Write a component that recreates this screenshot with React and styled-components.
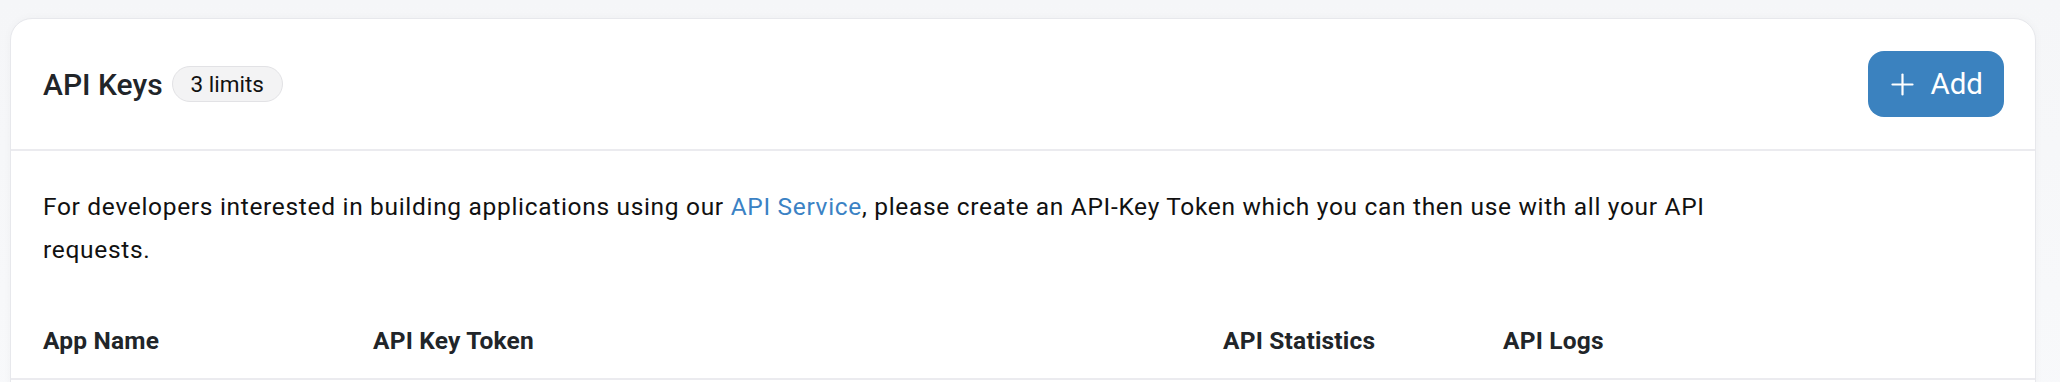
import React from "react";
import styled, { createGlobalStyle } from "styled-components";

const Global = createGlobalStyle`
  html, body { margin: 0; padding: 0; background: #f7f8fa; }
  body { font-family: Roboto, "Noto Sans", "Liberation Sans", sans-serif; color: #111; }
  * { box-sizing: border-box; }
`;

const Page = styled.div`
  padding: 18px 24px 0 10px;
  min-height: 382px;
  background: linear-gradient(180deg, #f5f6f8 0%, #f8f9fb 100%);
`;

const Card = styled.section`
  min-height: 420px;
  background: #fff;
  border: 1.5px solid #e7e8ec;
  border-radius: 22px 22px 0 0;
  box-shadow: 0 0 10px rgba(20, 30, 60, 0.03);
`;

const Header = styled.header`
  display: flex;
  align-items: center;
  justify-content: space-between;
  padding: 32px 31px 32px 32px;
  border-bottom: 2px solid #ebebef;
`;

const TitleGroup = styled.div`
  display: flex;
  align-items: center;
  gap: 9px;
`;

const Title = styled.h2`
  margin: 0;
  font-size: 30px;
  font-weight: 500;
  color: #212529;
`;

const Badge = styled.span`
  display: inline-flex;
  align-items: center;
  height: 36px;
  padding: 0 18px;
  border-radius: 18px;
  background: #f3f3f4;
  border: 1.5px solid #e2e2e5;
  font-size: 22.5px;
  font-weight: 400;
  color: #111;
`;

const AddButton = styled.button`
  display: inline-flex;
  align-items: center;
  gap: 16px;
  height: 66px;
  padding: 0 21px 0 23px;
  border: none;
  border-radius: 16px;
  background: #3b82bf;
  color: #fff;
  font-family: inherit;
  font-size: 29.5px;
  font-weight: 400;
  cursor: pointer;
`;

const Body = styled.div`
  padding: 34px 32px 0 32px;
`;

const Intro = styled.p`
  margin: 0;
  max-width: 1710px;
  font-size: 24.5px;
  letter-spacing: 0.68px;
  line-height: 43px;
  color: #111;
`;

const Link = styled.a`
  color: #3b82c4;
  text-decoration: none;
`;

const HeadRow = styled.div`
  display: grid;
  grid-template-columns: 330px 850px 280px 1fr;
  margin: 32px -32px 0;
  padding: 20px 32px 20px;
  border-bottom: 2px solid #ebebef;
`;

const HeadCell = styled.div`
  font-size: 24.5px;
  font-weight: 700;
  letter-spacing: 0.2px;
  line-height: 35px;
  color: #212529;
`;

const PlusIcon = () => (
  <svg width="23" height="23" viewBox="0 0 23 23" fill="none" stroke="#fff" strokeWidth="2.2" strokeLinecap="round">
    <line x1="11.5" y1="1.5" x2="11.5" y2="21.5" />
    <line x1="1.5" y1="11.5" x2="21.5" y2="11.5" />
  </svg>
);

export default function App() {
  return (
    <>
      <Global />
      <Page>
        <Card>
          <Header>
            <TitleGroup>
              <Title>API Keys</Title>
              <Badge>3 limits</Badge>
            </TitleGroup>
            <AddButton>
              <PlusIcon />
              Add
            </AddButton>
          </Header>
          <Body>
            <Intro>
              For developers interested in building applications using our{" "}
              <Link href="#">API Service</Link>, please create an API-Key Token which you can then use with all your API requests.
            </Intro>
            <HeadRow>
              <HeadCell>App Name</HeadCell>
              <HeadCell>API Key Token</HeadCell>
              <HeadCell>API Statistics</HeadCell>
              <HeadCell>API Logs</HeadCell>
            </HeadRow>
          </Body>
        </Card>
      </Page>
    </>
  );
}
